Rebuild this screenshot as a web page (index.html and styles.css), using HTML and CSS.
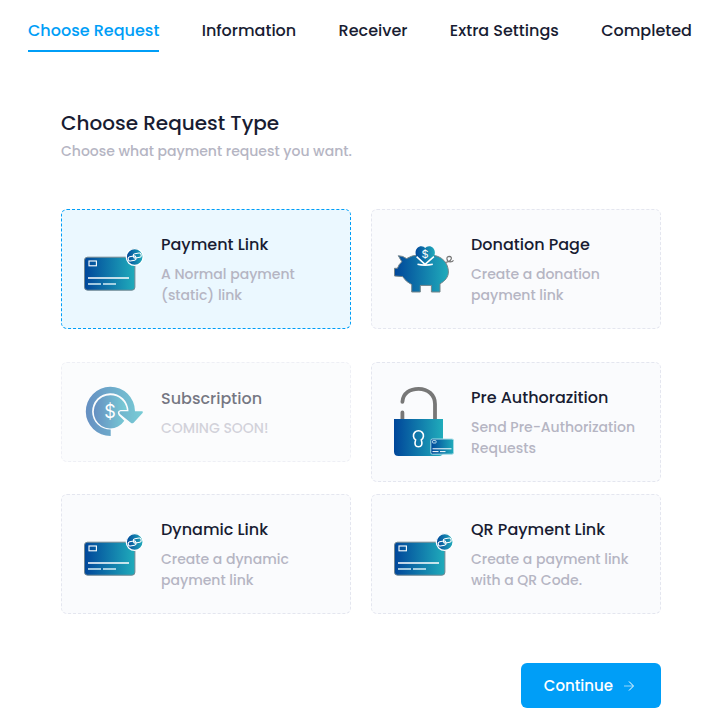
FILE: index.html
```html
<!DOCTYPE html>
<html lang="en">
<head>
<meta charset="utf-8">
<meta name="viewport" content="width=device-width, initial-scale=1">
<title>Choose Request Type</title>
<link rel="stylesheet" href="styles.css">
</head>
<body>
<svg class="defs" aria-hidden="true">
  <defs>
    <linearGradient id="brand" x1="0" y1="0" x2="1" y2="0">
      <stop offset="0" stop-color="#00469a"/>
      <stop offset="1" stop-color="#20acbb"/>
    </linearGradient>
    <symbol id="card-link" viewBox="0 0 60 44">
      <rect x="0.5" y="10.2" width="50.4" height="33" rx="3" fill="url(#brand)" stroke="#748891" stroke-width="1"/>
      <rect x="5" y="14" width="7.4" height="4.8" fill="none" stroke="#fff" stroke-width="1.1"/>
      <path d="M4 31h41" stroke="#fff" stroke-width="1.3"/>
      <path d="M4 37h13M19 37h13" stroke="#d3edf5" stroke-width="1.3"/>
      <circle cx="50.7" cy="10" r="8.4" fill="url(#brand)" stroke="#fff" stroke-width="1.3"/>
      <g fill="none" stroke="#fff" stroke-width="1.1" transform="rotate(-10 50.7 10)">
        <rect x="44" y="8.8" width="7.8" height="4.4" rx="1.8"/>
        <rect x="49.6" y="6.8" width="7.8" height="4.4" rx="1.8"/>
      </g>
    </symbol>
  </defs>
</svg>

<nav class="steps" aria-label="Steps">
  <a class="step step-active" href="#request" aria-current="step">Choose Request</a>
  <a class="step" href="#information">Information</a>
  <a class="step" href="#receiver">Receiver</a>
  <a class="step" href="#settings">Extra Settings</a>
  <a class="step" href="#completed">Completed</a>
</nav>

<form class="content" id="request">
  <h1 class="title">Choose Request Type</h1>
  <p class="subtitle">Choose what payment request you want.</p>

  <div class="options options-first">
    <label class="option">
      <input class="option-input" type="radio" name="type" value="link" checked>
      <svg class="icon icon-link" aria-hidden="true"><use href="#card-link"/></svg>
      <span class="option-text">
        <span class="option-title">Payment Link</span>
        <span class="option-desc">A Normal payment<br>(static) link</span>
      </span>
    </label>
    <label class="option">
      <input class="option-input" type="radio" name="type" value="donation">
      <svg class="icon icon-pig" viewBox="0 0 60 50" aria-hidden="true">
        <path d="M4.3 11.7Q9 11.8 12.6 14.6Q18 11 25 11H38C48 12 54.4 19 54.4 28C54.4 33 51 37 46 39.8V48H37.4V41.4H26.3V48H17.7V40.6Q12 38 8.6 32.6L.5 32V24.3H3.4Q5 20 7.8 17.7Z" fill="url(#brand)" stroke="#75858a" stroke-width="1"/>
        <path d="M31 21.4L22.5 12.7C19.8 7 23.3 2.3 27.4 2.3Q30 2.3 31.2 4Q32.5 2.3 35 2.3C39.3 2.3 42.6 7 39.9 12.7Z" fill="url(#brand)"/>
        <path d="M22.6 12.6L31 20.4L39.9 12.6M23.5 20.3Q31 22 38.8 20.3" fill="none" stroke="#fff" stroke-width="1.5"/>
        <text class="coin-small" x="31" y="14">$</text>
        <path d="M51.6 18.4C57.5 18 59 12.6 55.4 12.4C51.6 12.4 52.4 17.8 56.4 17.8Q58.8 17.8 59.5 16.2" fill="none" stroke="#777" stroke-width="1.2"/>
      </svg>
      <span class="option-text">
        <span class="option-title">Donation Page</span>
        <span class="option-desc">Create a donation<br>payment link</span>
      </span>
    </label>
  </div>

  <div class="options options-second">
    <label class="option option-disabled">
      <input class="option-input" type="radio" name="type" value="subscription" disabled>
      <svg class="icon icon-cycle" viewBox="0 0 60 54" aria-hidden="true">
        <path d="M26.7 51A24.6 24.6 0 1 1 51 26.2H58Q59.7 26.4 58.6 28L49.6 37.7Q48.2 39 46.8 37.7L36 29Q34.4 26.4 37 26.2H44.5A18.2 18.2 0 1 0 26.7 44.6Z" fill="url(#brand)"/>
        <path d="M26.4 10.2A16.6 16.6 0 1 0 40.3 35.8L34.7 30.3Q32.4 26 36.5 24.9H42.9A16.6 16.6 0 0 0 26.4 10.2Z" fill="url(#brand)"/>
        <text class="coin-large" x="26" y="33">$</text>
      </svg>
      <span class="option-text">
        <span class="option-title">Subscription</span>
        <span class="option-desc">COMING SOON!</span>
      </span>
    </label>
    <label class="option">
      <input class="option-input" type="radio" name="type" value="preauth">
      <svg class="icon icon-lock" viewBox="0 0 60 74" aria-hidden="true">
        <path d="M8.4 16.8C9 8 16 3.8 24.6 3.8C34 3.8 41 10 41 19V34M8.4 27.5V34" fill="none" stroke="#777" stroke-width="3.8" stroke-linecap="round"/>
        <path d="M0 34H49V67Q49 71 45 71H4.5Q0 71 0 66.5Z" fill="url(#brand)"/>
        <path d="M21.6 54.8A5 5 0 1 1 27.3 54.8Q29.4 61.8 24.4 61.8Q19.6 61.8 21.6 54.8Z" fill="none" stroke="#fff" stroke-width="1.6"/>
        <rect x="36.8" y="54" width="22.8" height="15.2" rx="1.6" fill="url(#brand)" stroke="#a8dce6" stroke-width="1"/>
        <rect x="38.5" y="55.6" width="3.6" height="2.4" rx=".6" fill="none" stroke="#cfeaf4" stroke-width=".9"/>
        <path d="M38.5 63.8H57.5M38.5 66.6H44.5M46 66.6H51.5" stroke="#fff" stroke-width="1"/>
      </svg>
      <span class="option-text">
        <span class="option-title">Pre Authorazition</span>
        <span class="option-desc">Send Pre-Authorization<br>Requests</span>
      </span>
    </label>
  </div>

  <div class="options">
    <label class="option">
      <input class="option-input" type="radio" name="type" value="dynamic">
      <svg class="icon icon-link" aria-hidden="true"><use href="#card-link"/></svg>
      <span class="option-text">
        <span class="option-title">Dynamic Link</span>
        <span class="option-desc">Create a dynamic<br>payment link</span>
      </span>
    </label>
    <label class="option">
      <input class="option-input" type="radio" name="type" value="qr">
      <svg class="icon icon-link" aria-hidden="true"><use href="#card-link"/></svg>
      <span class="option-text">
        <span class="option-title">QR Payment Link</span>
        <span class="option-desc">Create a payment link<br>with a QR Code.</span>
      </span>
    </label>
  </div>

  <div class="actions">
    <button class="continue" type="button">Continue
      <svg class="arrow" viewBox="0 0 12 12" aria-hidden="true">
        <path d="M1 6H10" opacity=".6"/>
        <path d="M6 1.5L10.5 6L6 10.5"/>
      </svg>
    </button>
  </div>
</form>
</body>
</html>
```
FILE: styles.css
```css
* {
  box-sizing: border-box;
}

body {
  margin: 0;
  background: #fff;
  color: #181c32;
  font-family: Poppins, Inter, sans-serif;
  font-weight: 500;
}

.defs {
  position: absolute;
  width: 0;
  height: 0;
}

.steps {
  display: flex;
  justify-content: space-between;
  padding: 18px 17px 0 28px;
}

.step {
  padding-bottom: 6px;
  border-bottom: 2px solid transparent;
  color: inherit;
  font-size: 16px;
  line-height: 26px;
  text-decoration: none;
  white-space: nowrap;
}

.step-active {
  border-color: #009ef7;
  color: #009ef7;
}

.content {
  padding: 58px 48px 13px 61px;
}

.title {
  margin: 0;
  font-size: 20px;
  font-weight: 500;
  line-height: 26px;
}

.subtitle {
  margin: 5px 0 47px;
  color: #b5b5c3;
  font-size: 14px;
  line-height: 21px;
}

.options {
  display: grid;
  grid-template-columns: 1fr 1fr;
  gap: 20px;
  align-items: start;
}

.options-first {
  margin-bottom: 33px;
}

.options-second {
  margin-bottom: 12px;
}

.option {
  display: flex;
  align-items: center;
  gap: 17px;
  padding: 22px;
  border: 1px dashed #e4e6ef;
  border-radius: 6px;
  background: #fafbfd;
  cursor: pointer;
}

.option:has(.option-input:checked) {
  border-color: #009ef7;
  background: #ebf8ff;
}

.option-disabled {
  opacity: 0.6;
}

.option-input {
  position: absolute;
  opacity: 0;
  pointer-events: none;
}

.option-text {
  display: flex;
  flex-direction: column;
  gap: 6px;
  white-space: nowrap;
}

.option-title {
  font-size: 16px;
  line-height: 26px;
}

.option-desc {
  color: #b5b5c3;
  font-size: 14px;
  line-height: 21px;
}

.icon {
  flex: none;
  width: 60px;
}

.icon-link {
  height: 44px;
}

.icon-pig {
  height: 50px;
}

.icon-cycle {
  height: 54px;
}

.icon-lock {
  height: 74px;
}

.coin-small,
.coin-large {
  fill: #fff;
  font-family: Inter, sans-serif;
  font-weight: 400;
  text-anchor: middle;
}

.coin-small {
  font-size: 11px;
}

.coin-large {
  font-size: 18px;
}

.actions {
  display: flex;
  justify-content: flex-end;
  margin-top: 49px;
}

.continue {
  display: flex;
  align-items: center;
  gap: 10px;
  padding: 12px 26px 12px 23px;
  border: 0;
  border-radius: 6px;
  background: #009ef7;
  color: #fff;
  font: inherit;
  font-size: 15px;
  line-height: 21px;
}

.arrow {
  width: 12px;
  height: 12px;
  fill: none;
  stroke: #fff;
  stroke-width: 1;
}
```
